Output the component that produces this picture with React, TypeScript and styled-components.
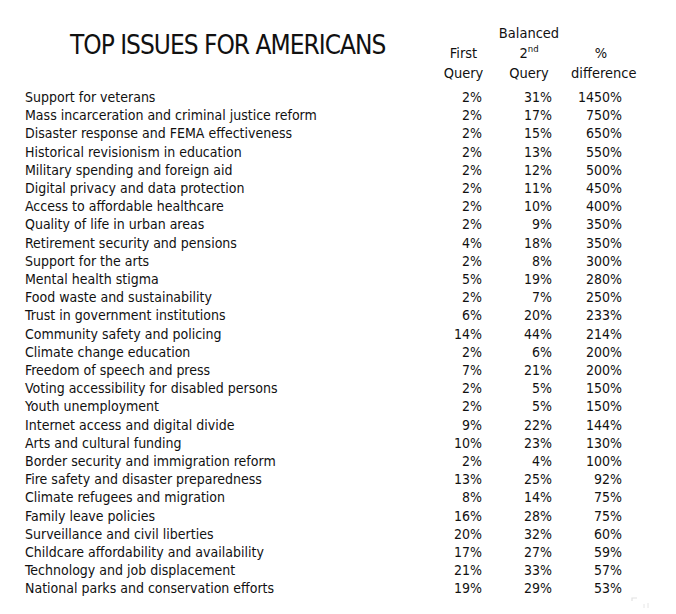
import React from "react";
import styled, { createGlobalStyle } from "styled-components";

const GlobalStyle = createGlobalStyle`
  html, body {
    margin: 0;
    padding: 0;
    background: #ffffff;
  }
  body {
    font-family: "DejaVu Sans Condensed", "DejaVu Sans", sans-serif;
    color: #111111;
  }
`;

type Issue = { name: string; first: string; second: string; diff: string };

const issues: Issue[] = [
  { name: "Support for veterans", first: "2%", second: "31%", diff: "1450%" },
  { name: "Mass incarceration and criminal justice reform", first: "2%", second: "17%", diff: "750%" },
  { name: "Disaster response and FEMA effectiveness", first: "2%", second: "15%", diff: "650%" },
  { name: "Historical revisionism in education", first: "2%", second: "13%", diff: "550%" },
  { name: "Military spending and foreign aid", first: "2%", second: "12%", diff: "500%" },
  { name: "Digital privacy and data protection", first: "2%", second: "11%", diff: "450%" },
  { name: "Access to affordable healthcare", first: "2%", second: "10%", diff: "400%" },
  { name: "Quality of life in urban areas", first: "2%", second: "9%", diff: "350%" },
  { name: "Retirement security and pensions", first: "4%", second: "18%", diff: "350%" },
  { name: "Support for the arts", first: "2%", second: "8%", diff: "300%" },
  { name: "Mental health stigma", first: "5%", second: "19%", diff: "280%" },
  { name: "Food waste and sustainability", first: "2%", second: "7%", diff: "250%" },
  { name: "Trust in government institutions", first: "6%", second: "20%", diff: "233%" },
  { name: "Community safety and policing", first: "14%", second: "44%", diff: "214%" },
  { name: "Climate change education", first: "2%", second: "6%", diff: "200%" },
  { name: "Freedom of speech and press", first: "7%", second: "21%", diff: "200%" },
  { name: "Voting accessibility for disabled persons", first: "2%", second: "5%", diff: "150%" },
  { name: "Youth unemployment", first: "2%", second: "5%", diff: "150%" },
  { name: "Internet access and digital divide", first: "9%", second: "22%", diff: "144%" },
  { name: "Arts and cultural funding", first: "10%", second: "23%", diff: "130%" },
  { name: "Border security and immigration reform", first: "2%", second: "4%", diff: "100%" },
  { name: "Fire safety and disaster preparedness", first: "13%", second: "25%", diff: "92%" },
  { name: "Climate refugees and migration", first: "8%", second: "14%", diff: "75%" },
  { name: "Family leave policies", first: "16%", second: "28%", diff: "75%" },
  { name: "Surveillance and civil liberties", first: "20%", second: "32%", diff: "60%" },
  { name: "Childcare affordability and availability", first: "17%", second: "27%", diff: "59%" },
  { name: "Technology and job displacement", first: "21%", second: "33%", diff: "57%" },
  { name: "National parks and conservation efforts", first: "19%", second: "29%", diff: "53%" },
];

const COLS = "415px 47px 84px 60px";

const Page = styled.div`
  position: relative;
  width: 676px;
  height: 614px;
  padding: 23px 0 0 25px;
  box-sizing: border-box;
  overflow: hidden;
`;

const Header = styled.div`
  display: grid;
  grid-template-columns: ${COLS};
  align-items: end;
  font-size: 14.5px;
  line-height: 20px;
`;

const Title = styled.h1`
  margin: 0;
  align-self: start;
  padding: 9px 0 0 45px;
  font-size: 26px;
  line-height: 27px;
  letter-spacing: -1px;
  font-weight: normal;
  white-space: nowrap;
`;

const HeadCell = styled.div`
  text-align: center;
  white-space: nowrap;
`;

const Sup = styled.sup`
  font-size: 9.5px;
  line-height: 0;
  vertical-align: 6px;
`;

const Body = styled.div`
  display: flex;
  flex-direction: column;
  margin-top: 5px;
`;

const Row = styled.div`
  display: grid;
  grid-template-columns: ${COLS};
  font-size: 14px;
  line-height: 18.2px;
  white-space: nowrap;
`;

const Label = styled.div``;

const Value = styled.div<{ $pad: number }>`
  text-align: right;
  padding-right: ${(p) => p.$pad}px;
`;

const Mark = styled.svg`
  position: absolute;
  left: 630px;
  top: 596px;
`;

export default function App() {
  return (
    <>
      <GlobalStyle />
      <Page>
        <Header>
          <Title>TOP ISSUES FOR AMERICANS</Title>
          <HeadCell>
            <br />
            First
            <br />
            Query
          </HeadCell>
          <HeadCell>
            Balanced
            <br />
            2<Sup>nd</Sup>
            <br />
            Query
          </HeadCell>
          <HeadCell>
            <br />
            %
            <br />
            difference
          </HeadCell>
        </Header>
        <Body>
          {issues.map((it) => (
            <Row key={it.name}>
              <Label>{it.name}</Label>
              <Value $pad={5}>{it.first}</Value>
              <Value $pad={19}>{it.second}</Value>
              <Value $pad={9}>{it.diff}</Value>
            </Row>
          ))}
        </Body>
        <Mark width="24" height="14" viewBox="0 0 24 14">
          <path d="M2 5 V2 H7" stroke="#e2e2e2" strokeWidth="1.2" fill="none" />
          <path d="M14 8 V12 M18 7 V12" stroke="#e6e6e6" strokeWidth="1" fill="none" />
        </Mark>
      </Page>
    </>
  );
}
